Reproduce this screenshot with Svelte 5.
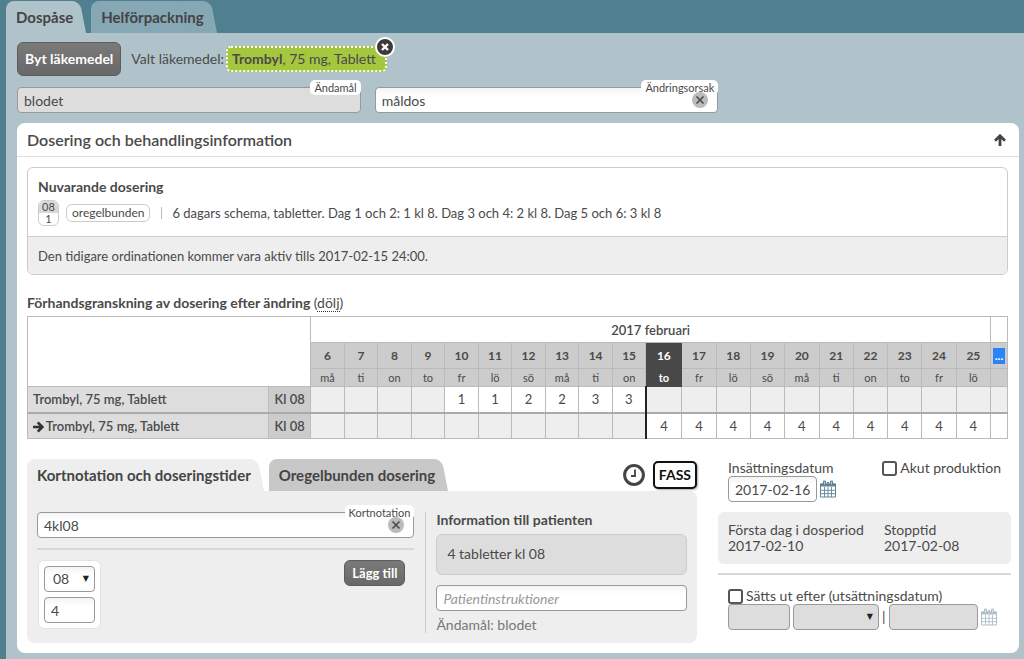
<script>
  const days = [
    { date: 6, name: 'må' },
    { date: 7, name: 'ti' },
    { date: 8, name: 'on' },
    { date: 9, name: 'to' },
    { date: 10, name: 'fr', before: 1 },
    { date: 11, name: 'lö', before: 1 },
    { date: 12, name: 'sö', before: 2 },
    { date: 13, name: 'må', before: 2 },
    { date: 14, name: 'ti', before: 3 },
    { date: 15, name: 'on', before: 3 },
    { date: 16, name: 'to', after: 4 },
    { date: 17, name: 'fr', after: 4 },
    { date: 18, name: 'lö', after: 4 },
    { date: 19, name: 'sö', after: 4 },
    { date: 20, name: 'må', after: 4 },
    { date: 21, name: 'ti', after: 4 },
    { date: 22, name: 'on', after: 4 },
    { date: 23, name: 'to', after: 4 },
    { date: 24, name: 'fr', after: 4 },
    { date: 25, name: 'lö', after: 4 }
  ];
  const changeDate = 16;

  let mainTab = $state('dospase');
  let dosingTab = $state('kort');
  let purpose = $state('blodet');
  let reason = $state('måldos');
  let notation = $state('4kl08');
  let hour = $state('08');
  let amount = $state('4');
  let instructions = $state('');
  let startDate = $state('2017-02-16');
  let urgent = $state(false);
  let hasEnd = $state(false);
</script>

{#snippet cross()}
  <svg viewBox="0 0 16 16" aria-hidden="true">
    <path d="M4.500 4.500l7 7M11.500 4.500l-7 7" fill="none" stroke="currentColor" stroke-width="1.600" />
  </svg>
{/snippet}

{#snippet calendar()}
  <svg width="16" height="18" viewBox="0 0 16 18" aria-hidden="true">
    <path d="M.5 4h15v13H.5z" fill="#fff" stroke="#5d8494" />
    <path d="M.5 3.500h15v3H.5z" fill="#5d8494" />
    <path d="M4.500 7v10M8 7v10M11.500 7v10M1 10.300h14M1 13.600h14" stroke="#5d8494" stroke-width=".9" />
    <path d="M3.500 1h2v4h-2zM10.500 1h2v4h-2z" fill="#b5cdd6" stroke="#5d8494" />
    <path d="M7 2.500h2" stroke="#5d8494" />
  </svg>
{/snippet}

<div class="page">
  <nav class="tabs main-tabs">
    <button class="tab" class:active={mainTab === 'dospase'} onclick={() => (mainTab = 'dospase')}>
      <span>Dospåse</span>
    </button>
    <button class="tab" class:active={mainTab === 'hel'} onclick={() => (mainTab = 'hel')}>
      <span>Helförpackning</span>
    </button>
  </nav>

  <main>
    <div class="drug-row">
      <button class="dark-btn large">Byt läkemedel</button>
      <span>Valt läkemedel:</span>
      <span class="drug">
        <b>Trombyl</b>, 75 mg, Tablett
        <button class="remove" aria-label="Ta bort">
          <svg viewBox="0 0 16 16" aria-hidden="true">
            <path d="M5 5l6 6M11 5l-6 6" fill="none" stroke="currentColor" stroke-width="2.400" />
          </svg>
        </button>
      </span>
    </div>

    <div class="reasons">
      <div class="field">
        <input id="purpose" bind:value={purpose} disabled />
        <label for="purpose">Ändamål</label>
      </div>
      <div class="field">
        <input id="reason" bind:value={reason} />
        <label for="reason">Ändringsorsak</label>
        <button class="clear" aria-label="Rensa" onclick={() => (reason = '')}>{@render cross()}</button>
      </div>
    </div>

    <section class="panel">
      <header>
        <h1>Dosering och behandlingsinformation</h1>
        <button class="plain" aria-label="Fäll ihop">
          <svg width="12" height="12" viewBox="0 0 12 12" aria-hidden="true">
            <path d="M6 12V2M1 6.800L6 1.800l5 5" fill="none" stroke="#444" stroke-width="2.800" />
          </svg>
        </button>
      </header>

      <div class="body">
        <div class="current">
          <div class="current-top">
            <h2>Nuvarande dosering</h2>
            <div class="schedule">
              <span class="dose"><span>08</span><span>1</span></span>
              <span class="pill">oregelbunden</span>
              <span class="bar"></span>
              <span>6 dagars schema, tabletter. Dag 1 och 2: 1 kl 8. Dag 3 och 4: 2 kl 8. Dag 5 och 6: 3 kl 8</span>
            </div>
          </div>
          <p>Den tidigare ordinationen kommer vara aktiv tills 2017-02-15 24:00.</p>
        </div>

        <h2 class="preview-title">
          Förhandsgranskning av dosering efter ändring <span>(<a href="#preview">dölj</a>)</span>
        </h2>

        <table id="preview">
          <colgroup>
            <col />
            <col class="col-time" />
            {#each days as day}
              <col class={day.date < changeDate ? 'col-past' : day.date === changeDate ? 'col-change' : 'col-next'} />
            {/each}
            <col class="col-more" />
          </colgroup>
          <thead>
            <tr class="month">
              <td colspan="2" rowspan="3"></td>
              <th colspan={days.length}>2017 februari</th>
              <td></td>
            </tr>
            <tr class="dates">
              {#each days as day}
                <th class:change={day.date === changeDate}>{day.date}</th>
              {/each}
              <th class="more"><a href="#more">...</a></th>
            </tr>
            <tr class="names">
              {#each days as day}
                <th class:change={day.date === changeDate}>{day.name}</th>
              {/each}
              <th></th>
            </tr>
          </thead>
          <tbody>
            <tr>
              <th class="name">Trombyl, 75 mg, Tablett</th>
              <th class="time">Kl 08</th>
              {#each days as day}
                <td class:empty={!day.before} class:from={day.date === changeDate}>{day.before ?? ''}</td>
              {/each}
              <td class="empty"></td>
            </tr>
            <tr class="new">
              <th class="name">
                <svg width="11" height="12" viewBox="0 0 12 12" aria-hidden="true">
                  <path d="M0 6h10M5.200 1l5 5-5 5" fill="none" stroke="#333" stroke-width="2.900" />
                </svg>
                Trombyl, 75 mg, Tablett
              </th>
              <th class="time">Kl 08</th>
              {#each days as day}
                <td class:empty={!day.after} class:from={day.date === changeDate}>{day.after ?? ''}</td>
              {/each}
              <td></td>
            </tr>
          </tbody>
        </table>

        <div class="bottom">
          <div class="dosing">
            <div class="tabs dosing-tabs">
              <button class="tab" class:active={dosingTab === 'kort'} onclick={() => (dosingTab = 'kort')}>
                <span>Kortnotation och doseringstider</span>
              </button>
              <button class="tab" class:active={dosingTab === 'oregel'} onclick={() => (dosingTab = 'oregel')}>
                <span>Oregelbunden dosering</span>
              </button>
              <div class="tools">
                <button class="plain" aria-label="Tider">
                  <svg width="22" height="22" viewBox="0 0 22 22" aria-hidden="true">
                    <circle cx="11" cy="11" r="9.400" fill="#fff" stroke="#444" stroke-width="3" />
                    <path d="M12 5.500v6.500H8" fill="none" stroke="#444" stroke-width="1.800" />
                  </svg>
                </button>
                <button class="fass">FASS</button>
              </div>
            </div>

            <div class="dosing-body">
              <div class="entry">
                <div class="field">
                  <input id="notation" bind:value={notation} />
                  <label for="notation">Kortnotation</label>
                  <button class="clear" aria-label="Rensa" onclick={() => (notation = '')}>{@render cross()}</button>
                </div>
                <hr />
                <div class="times">
                  <div class="time-card">
                    <div class="select">
                      <select bind:value={hour} aria-label="Klockslag">
                        <option>08</option>
                        <option>12</option>
                        <option>20</option>
                      </select>
                    </div>
                    <input bind:value={amount} aria-label="Antal" />
                  </div>
                  <button class="dark-btn">Lägg till</button>
                </div>
              </div>
              <div class="patient">
                <h2>Information till patienten</h2>
                <div class="summary">4 tabletter kl 08</div>
                <input bind:value={instructions} placeholder="Patientinstruktioner" aria-label="Patientinstruktioner" />
                <p>Ändamål: blodet</p>
              </div>
            </div>
          </div>

          <div class="dates-side">
            <div class="start">
              <div>
                <label for="start">Insättningsdatum</label>
                <div class="inline">
                  <input id="start" class="date" bind:value={startDate} />
                  <button class="plain" aria-label="Välj datum">{@render calendar()}</button>
                </div>
              </div>
              <label class="check"><input type="checkbox" bind:checked={urgent} />Akut produktion</label>
            </div>
            <dl>
              <div>
                <dt>Första dag i dosperiod</dt>
                <dd>2017-02-10</dd>
              </div>
              <div>
                <dt>Stopptid</dt>
                <dd>2017-02-08</dd>
              </div>
            </dl>
            <hr />
            <div class="end">
              <label class="check"><input type="checkbox" bind:checked={hasEnd} />Sätts ut efter (utsättningsdatum)</label>
              <div class="inline">
                <input class="count" disabled={!hasEnd} aria-label="Antal" />
                <div class="select unit">
                  <select disabled={!hasEnd} aria-label="Enhet"><option></option></select>
                </div>
                <span class="pipe">|</span>
                <input class="date" disabled={!hasEnd} aria-label="Utsättningsdatum" />
                <button class="plain" disabled={!hasEnd} aria-label="Välj utsättningsdatum">{@render calendar()}</button>
              </div>
            </div>
          </div>
        </div>
      </div>
    </section>
  </main>
</div>

<style>
  :global(body) {
    background: #507f8f;
  }

  .page,
  .page * {
    box-sizing: border-box;
  }

  .page {
    min-height: 100vh;
    padding: 1px 0 0 6px;
    display: flex;
    flex-direction: column;
    font: 14px/16px Lato, 'Liberation Sans', sans-serif;
    color: #4a4a4a;
  }

  button,
  input,
  select {
    font: inherit;
    color: inherit;
    margin: 0;
  }

  button {
    cursor: pointer;
  }

  h1,
  h2,
  p,
  dl,
  dd {
    margin: 0;
  }

  h1 {
    font-size: 16px;
    line-height: 20px;
    font-weight: 600;
  }

  h2 {
    font-size: 14px;
    line-height: 16px;
    font-weight: 700;
  }

  hr {
    width: 100%;
    height: 2px;
    margin: 0;
    border: 0;
    background: #d8d8d8;
  }

  .plain {
    display: flex;
    padding: 0;
    border: 0;
    background: none;
  }

  .plain:disabled {
    opacity: 0.5;
  }

  .tabs {
    display: flex;
    gap: 5px;
  }

  .tab {
    --tab-bg: #86a7b4;
    position: relative;
    height: 32px;
    padding: 0 13px 0 10px;
    border: 0;
    background: none;
    font-size: 15px;
    font-weight: 700;
    color: #444;
  }

  .tab span {
    position: relative;
    z-index: 1;
  }

  /* slanted right edge */
  .tab::before,
  .tab::after {
    content: '';
    position: absolute;
    top: 0;
    bottom: 0;
    background: var(--tab-bg);
  }

  .tab::before {
    left: 0;
    right: 20px;
    border-radius: 8px 0 0 0;
  }

  .tab::after {
    right: 0;
    width: 30px;
    border-radius: 0 8px 0 0;
    transform: skewX(11deg);
    transform-origin: bottom right;
  }

  .tab.active {
    --tab-bg: #b0c3cb;
  }

  main {
    flex: 1;
    padding: 9px 5px 6px 11px;
    background: #b0c3cb;
  }

  .drug-row {
    display: flex;
    align-items: center;
    gap: 10px;
  }

  .dark-btn {
    height: 26px;
    padding: 0 7px;
    border: 1px solid #5c5c5c;
    border-radius: 6px;
    background: linear-gradient(#7a7a7a, #686868);
    color: #fff;
    font-size: 13px;
    font-weight: 700;
  }

  .dark-btn.large {
    height: 34px;
    font-size: 14px;
  }

  .drug {
    position: relative;
    margin-left: -8px;
    padding: 3px 9px 3px 4px;
    border: 2px dotted #fff;
    border-radius: 5px;
    background: #a5c63f;
  }

  .remove {
    position: absolute;
    top: -11px;
    right: -10px;
    width: 20px;
    height: 20px;
    padding: 0;
    border: 2px solid #fff;
    border-radius: 50%;
    background: #3d3a3a;
    color: #fff;
  }

  .remove svg,
  .clear svg {
    display: block;
    width: 100%;
  }

  .reasons {
    display: grid;
    grid-template-columns: 1fr 1fr;
    gap: 14px;
    width: 70%;
    margin: 11px 0 10px;
  }

  input:not([type='checkbox']),
  select {
    display: block;
    width: 100%;
    height: 26px;
    padding: 0 6px;
    border: 1px solid #999;
    border-radius: 4px;
    background: linear-gradient(#f4f4f4, #fff 8px);
  }

  input:not([type='checkbox']):disabled,
  select:disabled {
    background: #ddd;
    opacity: 1;
  }

  .field {
    position: relative;
  }

  .field label {
    position: absolute;
    top: -7px;
    right: 0;
    padding: 0 4px;
    border-radius: 5px;
    background: #fff;
    font-size: 11px;
    line-height: 15px;
  }

  .clear {
    position: absolute;
    top: 5px;
    right: 10px;
    width: 16px;
    height: 16px;
    padding: 0;
    border: 0;
    border-radius: 50%;
    background: #bbb;
  }

  .panel {
    border-radius: 8px;
    background: #fff;
  }

  .panel header {
    display: flex;
    align-items: center;
    justify-content: space-between;
    height: 34px;
    padding: 0 13px 0 10px;
    border-bottom: 1px solid #ddd;
  }

  .body {
    padding: 10px 8px 10px 10px;
  }

  .current {
    margin-right: 3px;
    border: 1px solid #ccc;
    border-radius: 6px;
    overflow: hidden;
    font-size: 13px;
  }

  .current-top {
    padding: 11px 10px 10px;
  }

  .schedule {
    display: flex;
    align-items: center;
    margin-top: 5px;
  }

  .dose {
    display: flex;
    flex-direction: column;
    width: 21px;
    border: 1px solid #ccc;
    border-radius: 6px;
    overflow: hidden;
    font-size: 11px;
    line-height: 12px;
    text-align: center;
  }

  .dose span:first-child {
    background: #d8d8d8;
  }

  .pill {
    margin-left: 7px;
    padding: 0 5px;
    border: 1px solid #ccc;
    border-radius: 6px;
    font-size: 12px;
  }

  .bar {
    width: 1px;
    height: 12px;
    margin: 0 10px 0 11px;
    background: #bbb;
  }

  .current p {
    padding: 11px 10px 10px;
    border-top: 1px solid #ccc;
    background: #eee;
  }

  .preview-title {
    margin: 20px 0 5px;
  }

  .preview-title span {
    font-weight: 400;
  }

  .preview-title a {
    color: inherit;
    text-decoration: none;
    border-bottom: 1px dotted #333;
  }

  table {
    width: calc(100% - 3px);
    table-layout: fixed;
    border-collapse: collapse;
    font-size: 13px;
  }

  .col-time {
    width: 42px;
  }

  .col-past {
    width: 3.42%;
  }

  .col-change {
    width: 3.67%;
  }

  .col-next {
    width: 3.5%;
  }

  .col-more {
    width: 17px;
  }

  td,
  th {
    height: 26px;
    padding: 0;
    border: 1px solid #bbb;
    text-align: center;
    font-weight: 400;
  }

  .month th {
    font-weight: 600;
  }

  .dates th,
  .names th {
    background: #ccc;
    font-size: 12px;
  }

  .dates th {
    font-weight: 700;
  }

  .names th {
    height: 18px;
    font-size: 11px;
    line-height: 14px;
  }

  .dates th.change,
  .names th.change {
    border-color: #484848;
    background: #484848;
    color: #fff;
    font-weight: 700;
  }

  .more a {
    display: block;
    width: 12px;
    margin: 0 auto;
    background: #2a84f8;
    color: #fff;
    text-decoration: none;
  }

  .name,
  .time {
    background: #ddd;
    font-weight: 600;
  }

  .name {
    padding-left: 5px;
    text-align: left;
  }

  .name svg {
    vertical-align: -2px;
    margin-right: -1px;
  }

  .time {
    background: #ccc;
  }

  .empty {
    background: #eee;
  }

  .from {
    border-left: 2px solid #222;
  }

  .new td,
  .new th {
    border-top: 2px solid #aaa;
  }

  .bottom {
    display: flex;
    gap: 21px;
    margin-top: 20px;
  }

  .dosing {
    flex: 670;
  }

  .dosing-tabs .tab {
    --tab-bg: #c8c8c8;
  }

  .dosing-tabs .tab.active {
    --tab-bg: #eee;
  }

  .tools {
    display: flex;
    align-items: center;
    gap: 8px;
    margin-left: auto;
  }

  .fass {
    height: 28px;
    padding: 0 4px;
    border: 2px solid #111;
    border-radius: 5px;
    background: #fff;
    box-shadow: 1px 1px 2px #aaa;
    color: #111;
    font-weight: 700;
  }

  .dosing-body {
    display: flex;
    padding: 21px 10px 10px;
    border-radius: 0 8px 8px 8px;
    background: #eee;
  }

  .entry {
    flex: 390;
    padding-right: 11px;
    border-right: 1px solid #ccc;
  }

  .entry hr {
    margin: 10px 0;
  }

  .times {
    display: flex;
    justify-content: space-between;
    align-items: flex-start;
    padding: 0 9px 0 1px;
  }

  .time-card {
    display: grid;
    gap: 5px;
    width: 63px;
    padding: 5px;
    border: 1px solid #e4e4e4;
    border-radius: 6px;
    background: #fff;
  }

  .select {
    position: relative;
  }

  .select select {
    appearance: none;
    padding-left: 8px;
  }

  .select::after {
    content: '▼';
    position: absolute;
    top: 5px;
    right: 6px;
    font: 8px/16px 'DejaVu Sans', sans-serif;
    color: #222;
    pointer-events: none;
  }

  .patient {
    flex: 259;
    padding-left: 10px;
  }

  .summary {
    margin: 6px 0 10px;
    padding: 11px 10px 12px;
    border: 1px solid #ccc;
    border-radius: 6px;
    background: #ddd;
  }

  .patient p {
    margin-top: 6px;
    color: #777;
  }

  .patient input::placeholder {
    color: #999;
    font-style: italic;
  }

  .dates-side {
    flex: 293;
  }

  .start {
    display: flex;
    justify-content: space-between;
    align-items: flex-start;
    padding: 1px 10px 10px;
  }

  .inline {
    display: flex;
    align-items: center;
    gap: 3px;
  }

  .inline .date {
    width: 89px;
  }

  .inline .count {
    width: 62px;
  }

  .inline .unit {
    width: 86px;
  }

  .check {
    display: flex;
    align-items: center;
    gap: 3px;
  }

  .check input {
    appearance: none;
    width: 15px;
    height: 15px;
    border: 2px solid #555;
    border-radius: 3px;
    background: #fff;
  }

  .check input:checked {
    background: #555;
  }

  dl {
    display: grid;
    grid-template-columns: 156px 1fr;
    margin-bottom: 9px;
    padding: 10px;
    border-radius: 6px;
    background: #eee;
  }

  .end {
    padding: 13px 10px 0;
  }
</style>
